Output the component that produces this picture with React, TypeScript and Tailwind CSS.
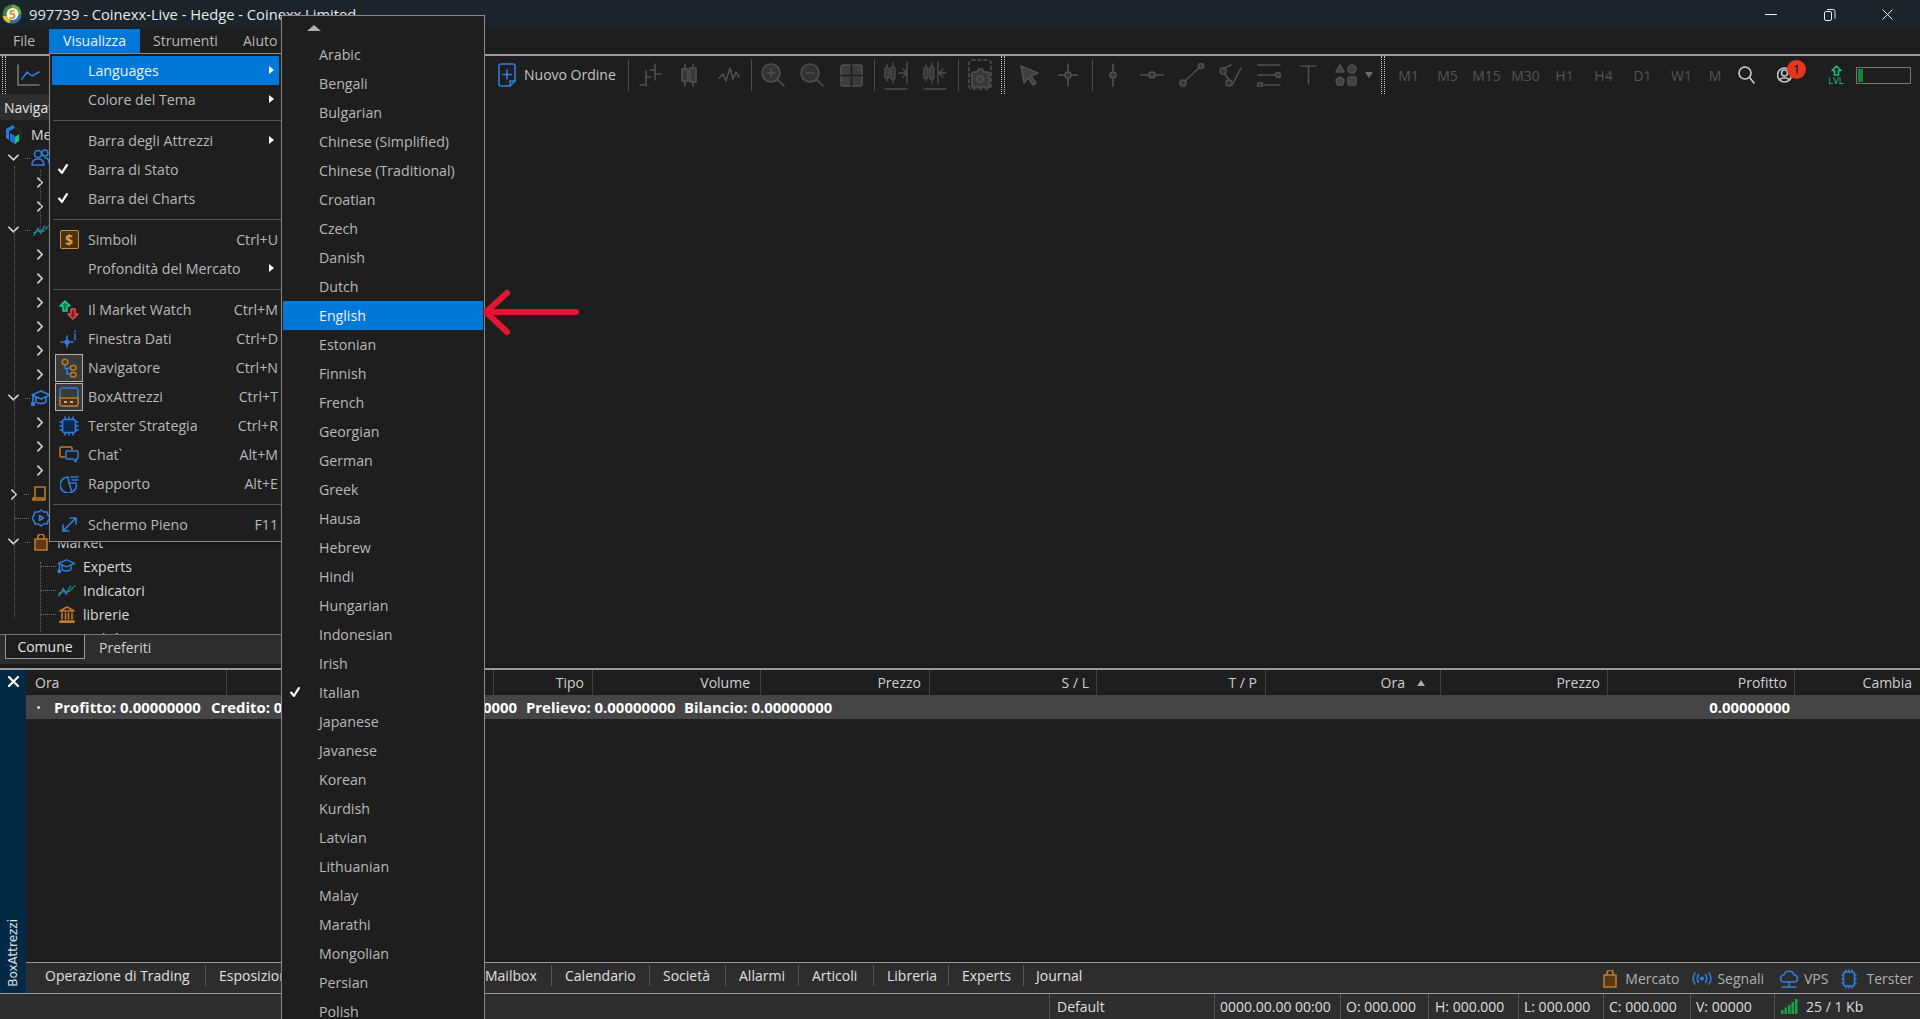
import type { ReactNode } from "react";

const FONT = "font-['Open_Sans','Noto_Sans',sans-serif]";

type IconProps = { className: string; box: string; children: ReactNode };

function Icon({ className, box, children }: IconProps) {
  return (
    <svg className={className} viewBox={box} fill="none" stroke="currentColor" strokeWidth="1.6" strokeLinecap="round" strokeLinejoin="round">
      {children}
    </svg>
  );
}

function Sep() {
  return <div className="w-px h-[32px] bg-[#4a4a4a] shrink-0" />;
}

function Grip({ className }: { className: string }) {
  return <div className={`w-[4px] h-[38px] shrink-0 border-x border-dotted border-[#d0d0d0] ${className}`} />;
}

function Toolbar() {
  const gray = "text-[#505050] shrink-0";
  return (
    <div className="h-[38px] flex items-center bg-[#1e1e1e] shrink-0">
      <Grip className="ml-[2px]" />
      <Icon className="ml-[11px] w-[24px] h-[22px] shrink-0 text-[#777]" box="0 0 24 22">
        <path d="M1 1v20h21" />
        <path d="M5 15l5-7 5 4 7-4" stroke="#2f7de0" />
      </Icon>
      <Icon className="ml-[457px] w-[18px] h-[24px] shrink-0 text-[#2f7de0]" box="0 0 18 24">
        <path d="M3 1h12a2 2 0 0 1 2 2v15l-5 5H3a2 2 0 0 1-2-2V3a2 2 0 0 1 2-2z" />
        <path d="M9 7v9M4.500 11.500h9M12 23v-5h5" />
      </Icon>
      <span className="ml-[8px] mt-[-2px] w-[93px] text-[14px] whitespace-nowrap text-[#c4c4c4]">Nuovo Ordine</span>
      <div className="ml-[11px]"><Sep /></div>
      <Icon className={`ml-[9px] w-[24px] h-[24px] ${gray}`} box="0 0 24 24">
        <path d="M8 8v15M2 22h6M8 14h5M17 1v16M12 7h5M17 11h6" />
      </Icon>
      <Icon className={`ml-[19px] w-[16px] h-[24px] ${gray}`} box="0 0 16 24">
        <path d="M4 1v22M12 1v22" />
        <rect x="1" y="6" width="6" height="12" fill="#383838" />
        <rect x="9" y="5" width="6" height="14" fill="#383838" />
      </Icon>
      <Icon className={`ml-[21px] w-[22px] h-[20px] ${gray}`} box="0 0 22 20">
        <path d="M1 13l4-4 3 7 4-13 3 11 3-7 3 5" />
      </Icon>
      <div className="ml-[11px]"><Sep /></div>
      <Icon className={`ml-[9px] w-[24px] h-[24px] ${gray}`} box="0 0 24 24">
        <circle cx="10" cy="10" r="9" fill="#333" />
        <path d="M16.500 16.500L23 23M10 6v8M6 10h8" />
      </Icon>
      <Icon className={`ml-[15px] w-[24px] h-[24px] ${gray}`} box="0 0 24 24">
        <circle cx="10" cy="10" r="9" fill="#333" />
        <path d="M16.500 16.500L23 23M6 10h8" />
      </Icon>
      <Icon className={`ml-[16px] w-[23px] h-[23px] ${gray}`} box="0 0 23 23">
        <rect x="1" y="1" width="21" height="21" rx="2" fill="#3c3c3c" />
        <path d="M11.500 1v21M1 11.500h21" stroke="#1e1e1e" />
      </Icon>
      <div className="ml-[11px]"><Sep /></div>
      <Icon className={`ml-[9px] w-[24px] h-[30px] ${gray}`} box="0 0 24 30">
        <path d="M3 5v16M9 3v20M15 13h7M19 9l4 4-4 4M23 2v22M1 29h22" strokeWidth="1.300" />
        <rect x="1" y="8" width="4" height="10" fill="#383838" strokeWidth="1" />
        <rect x="7" y="7" width="4" height="12" fill="#383838" strokeWidth="1" />
      </Icon>
      <Icon className={`ml-[15px] w-[24px] h-[30px] ${gray}`} box="0 0 24 30">
        <path d="M3 5v16M9 3v20M15 2v22M23 13h-6M20 9l-4 4 4 4M1 29h22" strokeWidth="1.300" />
        <rect x="1" y="8" width="4" height="10" fill="#383838" strokeWidth="1" />
        <rect x="7" y="7" width="4" height="12" fill="#383838" strokeWidth="1" />
      </Icon>
      <div className="ml-[11px]"><Sep /></div>
      <Icon className={`ml-[9px] w-[24px] h-[32px] ${gray}`} box="0 0 24 32">
        <rect x="1" y="1" width="22" height="29" rx="3" strokeDasharray="3 3" />
        <path d="M4 28v-13a2 2 0 0 1 2-2h3l2-3h3l2 3h3a2 2 0 0 1 2 2v13z" fill="#383838" />
        <circle cx="12" cy="20" r="3" />
      </Icon>
      <Grip className="ml-[9px]" />
      <Icon className={`ml-[15px] w-[19px] h-[21px] ${gray}`} box="0 0 19 21">
        <path d="M1 1l17 7-7 3 5 7-3 2-5-7-4 5z" fill="#404040" />
      </Icon>
      <Icon className={`ml-[19px] w-[20px] h-[24px] ${gray}`} box="0 0 20 24">
        <path d="M10 1v22M0 12h20" />
        <circle cx="10" cy="12" r="3" fill="#333" />
      </Icon>
      <div className="ml-[14px]"><Sep /></div>
      <Icon className={`ml-[10px] w-[20px] h-[24px] ${gray}`} box="0 0 20 24">
        <path d="M10 1v22" />
        <circle cx="10" cy="12" r="3" fill="#333" />
      </Icon>
      <Icon className={`ml-[17px] w-[24px] h-[10px] ${gray}`} box="0 0 24 10">
        <path d="M0 5h24" />
        <circle cx="12" cy="5" r="3" fill="#333" />
      </Icon>
      <Icon className={`ml-[15px] w-[26px] h-[24px] ${gray}`} box="0 0 26 24">
        <path d="M5 19L21 4" />
        <circle cx="4" cy="20" r="3" fill="#333" />
        <circle cx="22" cy="3" r="2.500" fill="#333" />
      </Icon>
      <Icon className={`ml-[13px] w-[24px] h-[24px] ${gray}`} box="0 0 24 24">
        <path d="M4 6l9-4M6 10l6 8M23 5L14 22" />
        <circle cx="5" cy="8" r="3" fill="#333" />
        <circle cx="11" cy="20" r="3" fill="#333" />
      </Icon>
      <Icon className={`ml-[15px] w-[24px] h-[24px] ${gray}`} box="0 0 24 24">
        <path d="M1 2h22M1 12h18M7 22h16" />
        <circle cx="21" cy="12" r="2.500" fill="#333" />
        <circle cx="3" cy="22" r="2.500" fill="#333" />
      </Icon>
      <Icon className={`ml-[19px] w-[17px] h-[20px] ${gray}`} box="0 0 17 20">
        <path d="M1 1h15M8.500 1v18" />
      </Icon>
      <Icon className={`ml-[18px] w-[22px] h-[22px] ${gray}`} box="0 0 22 22">
        <path d="M5 1l4 7H1z" fill="#404040" />
        <circle cx="17" cy="5" r="4" fill="#404040" />
        <path d="M5 13l4 3-1.500 5h-5L1 16z" fill="#404040" />
        <rect x="13" y="13" width="8" height="8" rx="1.500" fill="#404040" />
      </Icon>
      <div className="ml-[8px] w-0 h-0 shrink-0 border-x-[4.500px] border-x-transparent border-t-[6px] border-t-[#6a6a6a]" />
      <Grip className="ml-[8px]" />
      <div className="ml-[4px] flex text-[14px] text-[#555] shrink-0">
        {["M1", "M5", "M15", "M30", "H1", "H4", "D1", "W1"].map((t) => (
          <span key={t} className="w-[39px] text-center">{t}</span>
        ))}
        <span className="w-[28px] text-center">M</span>
      </div>
      <Icon className="ml-[9px] w-[17px] h-[18px] shrink-0 text-[#d0d0d0]" box="0 0 17 18">
        <circle cx="7" cy="7" r="6" />
        <path d="M11.500 11.500L16 17" />
      </Icon>
      <div className="ml-[22px] relative w-[15px] h-[18px] shrink-0">
        <Icon className="w-[15px] h-[18px] text-[#c8c8c8]" box="0 0 15 18">
          <circle cx="7.500" cy="9" r="7" />
          <circle cx="7.500" cy="7" r="3" />
          <path d="M2.500 14c2-3 8-3 10 0" />
        </Icon>
        <span className="absolute left-[10px] top-[-6px] w-[19px] h-[19px] rounded-full bg-[#e5371f] text-[#111] text-[13px] leading-[19px] text-center">1</span>
      </div>
      <div className="ml-[36px] w-[16px] flex flex-col items-center shrink-0">
        <Icon className="w-[11px] h-[11px] text-[#12c27a]" box="0 0 11 11">
          <path d="M5.500 1L10 5.500H7.500V10h-4V5.500H1z" />
        </Icon>
        <span className="text-[9.500px] leading-[10px] text-[#12c27a]">LVL</span>
      </div>
      <div className="ml-[12px] w-[55px] h-[17px] border border-[#777] shrink-0 p-px">
        <div className="w-[5px] h-full bg-[#14853a]" />
      </div>
    </div>
  );
}

function Chevron({ dir, className }: { dir: "d" | "r"; className: string }) {
  return dir === "d" ? (
    <Icon className={`${className} text-[#d8d8d8] shrink-0`} box="0 0 12 8">
      <path d="M1 1l5 5 5-5" strokeWidth="1.800" />
    </Icon>
  ) : (
    <Icon className={`${className} text-[#d8d8d8] shrink-0`} box="0 0 8 12">
      <path d="M1 1l5 5-5 5" strokeWidth="1.800" />
    </Icon>
  );
}

function Dots({ className }: { className: string }) {
  return <div className={`h-0 border-t border-dotted border-[#777] shrink-0 ${className}`} />;
}

function CapIcon({ className }: { className: string }) {
  return (
    <Icon className={`${className} text-[#2f7de0] shrink-0`} box="0 0 20 18">
      <path d="M1 6l9-4 9 4-9 4zM5 8v5c3 2 7 2 10 0V8M2 7v7" />
      <circle cx="2" cy="15" r="1.500" fill="#2f7de0" />
    </Icon>
  );
}

function WaveIcon({ className }: { className: string }) {
  return (
    <svg className={`${className} shrink-0`} viewBox="0 0 20 16" fill="none" strokeWidth="1.500" strokeLinecap="round">
      <path d="M1 14l5-8 3 6 5-9" stroke="#2f7de0" />
      <path d="M1 11c3 0 4-2 7-2s4 1 6-1 3-5 5-5" stroke="#18a34a" strokeDasharray="3 2" />
    </svg>
  );
}

function Sub({ n }: { n: number }) {
  return (
    <>
      {Array.from({ length: n }).map((_, i) => (
        <div key={i} className="h-[24px] flex items-center pl-[37px]">
          <Chevron dir="r" className="w-[7px] h-[11px]" />
        </div>
      ))}
    </>
  );
}

function Navigator() {
  return (
    <div className="w-[281px] shrink-0 flex flex-col bg-[#1e1e1e] overflow-hidden">
      <div className="h-[26px] shrink-0 bg-[#2d2d2d] flex items-center pl-[4px] text-[14px] text-[#e4e4e4] mb-[2px]">Navigatore</div>
      <div className="relative flex-1 overflow-hidden text-[14px] text-[#d8d8d8]">
        <div className="absolute left-[14px] top-[44px] h-[452px] border-l border-dotted border-[#666]" />
        <div className="absolute left-[40px] top-[48px] h-[64px] border-l border-dotted border-[#555]" />
        <div className="absolute left-[40px] top-[440px] h-[70px] border-l border-dotted border-[#666]" />
        <div className="h-[24px] flex items-center pl-[5px]">
          <svg className="w-[18px] h-[21px] shrink-0" viewBox="0 0 18 21">
            <path d="M8 1L1 5v9l3 2V7l6-3z" fill="#1f7fe0" />
            <path d="M11 3l6 3v8l-3 2V7l-6-2z" fill="#2a2a2a" />
            <path d="M5 9l5 3v8l-5-3z" fill="#1f6fd6" />
            <path d="M10 13l4-3v7l-4 3z" fill="#18c48a" />
          </svg>
          <span className="ml-[8px] whitespace-nowrap">MetaTrader 5</span>
        </div>
        <div className="h-[24px] flex items-center pl-[8px]">
          <Chevron dir="d" className="w-[11px] h-[8px]" />
          <Dots className="ml-[6px] w-[5px]" />
          <Icon className="ml-[1px] w-[19px] h-[18px] text-[#2f7de0] shrink-0" box="0 0 19 18">
            <circle cx="7" cy="5" r="3.500" />
            <path d="M1 16c0-4 2-6 6-6s6 2 6 6z" />
            <circle cx="14" cy="4" r="3" />
            <path d="M14 9c3 0 4 2 4 5" />
          </Icon>
        </div>
        <Sub n={2} />
        <div className="h-[24px] flex items-center pl-[8px]">
          <Chevron dir="d" className="w-[11px] h-[8px]" />
          <Dots className="ml-[6px] w-[5px]" />
          <WaveIcon className="ml-[3px] w-[17px] h-[14px]" />
        </div>
        <Sub n={6} />
        <div className="h-[24px] flex items-center pl-[8px]">
          <Chevron dir="d" className="w-[11px] h-[8px]" />
          <Dots className="ml-[6px] w-[5px]" />
          <CapIcon className="ml-[1px] w-[20px] h-[18px]" />
        </div>
        <Sub n={3} />
        <div className="h-[24px] flex items-center pl-[11px]">
          <Chevron dir="r" className="w-[7px] h-[11px]" />
          <Dots className="ml-[6px] w-[5px]" />
          <Icon className="ml-[3px] w-[14px] h-[16px] text-[#c07a28] shrink-0" box="0 0 14 16">
            <path d="M3 1h10v13H1l2-2zM1 14v-2h10v2" />
          </Icon>
        </div>
        <div className="h-[24px] flex items-center pl-[15px]">
          <Dots className="w-[14px]" />
          <Icon className="ml-[3px] w-[18px] h-[18px] text-[#2f7de0] shrink-0" box="0 0 18 18">
            <path d="M9 1l2.500 2H15l1 3 2 3-2 3-1 3h-3.500L9 17l-2.500-2H3l-1-3-2-3 2-3 1-3h3.500z" />
            <path d="M7.500 6.500v5l4-2.500z" />
          </Icon>
        </div>
        <div className="h-[24px] flex items-center pl-[8px]">
          <Chevron dir="d" className="w-[11px] h-[8px]" />
          <Dots className="ml-[6px] w-[5px]" />
          <Icon className="ml-[4px] w-[14px] h-[17px] text-[#c07a28] shrink-0" box="0 0 14 17">
            <path d="M1 5h12v11H1z" fill="#5a3a14" />
            <path d="M4 5V3a3 3 0 0 1 6 0v2" />
          </Icon>
          <span className="ml-[9px]">Market</span>
        </div>
        <div className="h-[24px] flex items-center pl-[41px]">
          <Dots className="w-[15px]" />
          <CapIcon className="ml-[1px] w-[19px] h-[16px]" />
          <span className="ml-[7px]">Experts</span>
        </div>
        <div className="h-[24px] flex items-center pl-[41px]">
          <Dots className="w-[15px]" />
          <WaveIcon className="ml-[2px] w-[18px] h-[15px]" />
          <span className="ml-[7px]">Indicatori</span>
        </div>
        <div className="h-[24px] flex items-center pl-[41px]">
          <Dots className="w-[15px]" />
          <Icon className="ml-[3px] w-[16px] h-[17px] text-[#c07a28] shrink-0" box="0 0 16 17">
            <path d="M8 1l7 4H1zM3 7v6M6.500 7v6M9.500 7v6M13 7v6M1 15h14v1.500H1z" />
          </Icon>
          <span className="ml-[8px]">librerie</span>
        </div>
        <div className="h-[24px] flex items-center pl-[61px]">
          <span className="ml-[22px]">Utilità</span>
        </div>
      </div>
      <div className="h-[30px] shrink-0 bg-[#2d2d2d] border-t border-[#777] flex items-start text-[14px]">
        <div className="ml-[5px] w-[80px] h-[24px] bg-[#1e1e1e] border border-t-0 border-[#999] text-[#e4e4e4] flex items-center justify-center">Comune</div>
        <div className="ml-[14px] h-[24px] flex items-center text-[#d0d0d0]">Preferiti</div>
      </div>
    </div>
  );
}

const columns = [
  { label: "Ora", cls: "w-[201px] text-left pl-[9px]" },
  { label: "Simbolo", cls: "w-[133px] text-right pr-[8px]" },
  { label: "Ticket", cls: "w-[134px] text-right pr-[8px]" },
  { label: "Tipo", cls: "w-[99px] text-right pr-[8px]" },
  { label: "Volume", cls: "w-[168px] text-right pr-[10px]" },
  { label: "Prezzo", cls: "w-[169px] text-right pr-[8px]" },
  { label: "S / L", cls: "w-[167px] text-right pr-[7px]" },
  { label: "T / P", cls: "w-[169px] text-right pr-[8px]" },
];

const tabs = [
  { label: "Operazione di Trading", cls: "w-[174px]" },
  { label: "Esposizione", cls: "w-[110px]" },
  { label: "Storia", cls: "w-[84px]" },
  { label: "News", cls: "w-[72px]" },
  { label: "Mailbox", cls: "w-[80px]" },
  { label: "Calendario", cls: "w-[98px]" },
  { label: "Società", cls: "w-[76px]" },
  { label: "Allarmi", cls: "w-[73px]" },
  { label: "Articoli", cls: "w-[75px]" },
  { label: "Libreria", cls: "w-[75px]" },
  { label: "Experts", cls: "w-[75px]" },
];

function Toolbox() {
  return (
    <div className="h-[325px] shrink-0 flex border-t-2 border-[#999] bg-[#1e1e1e]">
      <div className="w-[26px] shrink-0 bg-[#022a46] flex flex-col items-center justify-between pt-[6px] pb-[6px]">
        <Icon className="w-[11px] h-[11px] text-white" box="0 0 11 11">
          <path d="M1 1l9 9M10 1l-9 9" strokeWidth="2.200" />
        </Icon>
        <span className="[writing-mode:vertical-rl] rotate-180 font-['DejaVu_Sans',sans-serif] text-[12px] leading-[12px] text-[#e0e0e0]">BoxAttrezzi</span>
      </div>
      <div className="flex-1 flex flex-col min-w-0">
        <div className="h-[25px] shrink-0 flex text-[14px] text-[#cfcfcf]">
          {columns.map((c) => (
            <div key={c.label + c.cls} className={`${c.cls} h-full border-r border-[#444] flex items-center shrink-0`}>
              <span className="w-full whitespace-nowrap">{c.label}</span>
            </div>
          ))}
          <div className="w-[175px] h-full border-r border-[#444] flex items-center justify-end pr-[15px] shrink-0">
            Ora
            <span className="ml-[12px] w-0 h-0 border-x-[4.500px] border-x-transparent border-b-[6px] border-b-[#aaa]" />
          </div>
          <div className="w-[167px] h-full border-r border-[#444] flex items-center justify-end pr-[7px] shrink-0">Prezzo</div>
          <div className="w-[187px] h-full border-r border-[#444] flex items-center justify-end pr-[7px] shrink-0">Profitto</div>
          <div className="flex-1 flex items-center justify-end pr-[8px]">Cambia</div>
        </div>
        <div className="h-[24px] pt-px shrink-0 bg-[#454545] flex items-center text-[14.900px] font-bold text-white whitespace-nowrap">
          <span className="ml-[11px] w-[3px] h-[3px] rounded-full bg-[#ddd]" />
          <span className="ml-[14px] w-[147px]">Profitto: 0.00000000</span>
          <span className="ml-[10px] w-[143px]">Credito: 0.00000000</span>
          <span className="ml-[10px] w-[153px] flex justify-end">Deposito: 0.00000000</span>
          <span className="ml-[9px] w-[148px]">Prelievo: 0.00000000</span>
          <span className="ml-[10px] w-[147px]">Bilancio: 0.00000000</span>
          <span className="ml-auto mr-[130px]">0.00000000</span>
        </div>
        <div className="flex-1" />
        <div className="h-[31px] shrink-0 border-t border-[#999] bg-[#2d2d2d] flex items-center text-[14px] text-[#e0e0e0]">
          <div className="ml-[6px] flex mb-[6px]">
            {tabs.map((t) => (
              <div key={t.label} className={`${t.cls} h-[21px] pl-[13px] border-r border-[#555] flex items-center whitespace-nowrap shrink-0`}>{t.label}</div>
            ))}
            <div className="pl-[12px] h-[21px] flex items-center">Journal</div>
          </div>
          <div className="ml-auto flex items-center text-[#b0b0b0] pt-[1px]">
            <Icon className="w-[14px] h-[18px] text-[#c07a28] shrink-0" box="0 0 14 18">
              <path d="M1 5h12v12H1z" fill="#5a3a14" />
              <path d="M4 5V3a3 3 0 0 1 6 0v2" />
            </Icon>
            <span className="ml-[8px]">Mercato</span>
            <Icon className="ml-[13px] w-[20px] h-[13px] text-[#2f7de0] shrink-0" box="0 0 20 13">
              <circle cx="10" cy="6.500" r="1.300" fill="#2f7de0" />
              <path d="M6.500 2.500c-1.500 2.500-1.500 5.500 0 8M13.500 2.500c1.500 2.500 1.500 5.500 0 8M3 1c-2.500 3.500-2.500 7.500 0 11M17 1c2.500 3.500 2.500 7.500 0 11" />
            </Icon>
            <span className="ml-[5px]">Segnali</span>
            <Icon className="ml-[15px] w-[20px] h-[20px] text-[#2f7de0] shrink-0" box="0 0 20 20">
              <path d="M5 13a3.500 3.500 0 0 1 0-7c1-5 9-5 10 0a3.500 3.500 0 0 1 0 7zM10 13v4M3 18h14" />
            </Icon>
            <span className="ml-[5px]">VPS</span>
            <Icon className="ml-[13px] w-[16px] h-[20px] text-[#2f7de0] shrink-0" box="0 0 16 20">
              <rect x="2.500" y="3" width="11" height="14" rx="2" />
              <path d="M5 1v2M8 1v2M11 1v2M5 17v2M8 17v2M11 17v2M1 6h1.500M1 10h1.500M1 14h1.500M13.500 6H15M13.500 10H15M13.500 14H15" />
            </Icon>
            <span className="ml-[9px] mr-[7px]">Terster</span>
          </div>
        </div>
      </div>
    </div>
  );
}

const statusCells = [
  { label: "Default", cls: "w-[165px] pl-[7px]" },
  { label: "0000.00.00 00:00", cls: "w-[126px] pl-[5px]" },
  { label: "O: 000.000", cls: "w-[88px] pl-[5px]" },
  { label: "H: 000.000", cls: "w-[90px] pl-[6px]" },
  { label: "L: 000.000", cls: "w-[85px] pl-[5px]" },
  { label: "C: 000.000", cls: "w-[87px] pl-[5px]" },
  { label: "V: 00000", cls: "w-[84px] pl-[5px]" },
];

function StatusBar() {
  return (
    <div className="h-[26px] shrink-0 border-t border-[#999] bg-[#2d2d2d] flex justify-end items-stretch text-[14px] text-[#dedede]">
      {statusCells.map((c) => (
        <div key={c.label} className={`${c.cls} border-l border-[#555] flex items-center whitespace-nowrap`}>{c.label}</div>
      ))}
      <div className="w-[146px] border-l border-[#555] flex items-center pl-[6px]">
        <svg className="w-[17px] h-[15px] shrink-0" viewBox="0 0 17 15" fill="#18a34a">
          <rect x="0" y="11" width="2.500" height="4" />
          <rect x="3.500" y="8.500" width="2.500" height="6.500" />
          <rect x="7" y="6" width="2.500" height="9" />
          <rect x="10.500" y="3" width="2.500" height="12" />
          <rect x="14" y="0" width="2.500" height="15" />
        </svg>
        <span className="ml-[8px] whitespace-nowrap">25 / 1 Kb</span>
      </div>
    </div>
  );
}

function Check({ className }: { className: string }) {
  return (
    <Icon className={`w-[10px] h-[10px] text-white ${className}`} box="0 0 9 9">
      <path d="M1 5l2.500 3L8 1" strokeWidth="2" />
    </Icon>
  );
}

function MenuItem({ label, icon, shortcut, arrow, check, active, boxed }: {
  label: string;
  icon?: ReactNode;
  shortcut?: string;
  arrow?: boolean;
  check?: boolean;
  active?: boolean;
  boxed?: boolean;
}) {
  return (
    <div className={`h-[29px] mx-[2px] flex items-center ${active ? "bg-[#0078d7] text-[#f0f0f0]" : "text-[#b8b8b8]"}`}>
      <div className={`w-[28px] h-[28px] ml-[3px] flex items-center justify-center shrink-0 ${boxed ? "border border-[#b0b0b0] bg-[#3a3a3a]" : ""}`}>
        {check ? <Check className="mr-[12px] mt-[-2px]" /> : icon}
      </div>
      <span className="ml-[5px] whitespace-nowrap">{label}</span>
      {shortcut && <span className="ml-auto mr-px">{shortcut}</span>}
      {arrow && <span className="ml-auto mr-[5px] mt-[-2px] w-0 h-0 border-y-[4.500px] border-y-transparent border-l-[5px] border-l-white" />}
    </div>
  );
}

function MenuSep({ className }: { className: string }) {
  return (
    <div className={`${className} flex items-center pl-[3px]`}>
      <div className="w-full h-px bg-[#555]" />
    </div>
  );
}

const blue = "#2f7de0";
const orange = "#c07a28";

function ViewMenu() {
  return (
    <div className="absolute left-[49px] top-[53px] w-[233px] h-[489px] z-20 bg-[#1e1e1e] border border-[#8a8a8a] pt-[2px] text-[14.200px] shadow-[2px_2px_3px_rgba(0,0,0,0.4)]">
      <MenuItem label="Languages" arrow active />
      <MenuItem label="Colore del Tema" arrow />
      <MenuSep className="h-[12px]" />
      <MenuItem label="Barra degli Attrezzi" arrow />
      <MenuItem label="Barra di Stato" check />
      <MenuItem label="Barra dei Charts" check />
      <MenuSep className="h-[12px]" />
      <MenuItem
        label="Simboli"
        shortcut="Ctrl+U"
        icon={
          <div className="w-[19px] h-[19px] rounded-[2px] border border-[#d08a3c] bg-[#4a3114] text-[#e09a48] text-[14px] font-bold leading-[17px] text-center">$</div>
        }
      />
      <MenuItem label="Profondità del Mercato" arrow />
      <MenuSep className="h-[12px]" />
      <MenuItem
        label="Il Market Watch"
        shortcut="Ctrl+M"
        icon={
          <svg className="w-[20px] h-[20px]" viewBox="0 0 20 20" strokeWidth="1.500" strokeLinejoin="round">
            <path d="M6 1L1 6h3v5h4V6h3z" fill="#0f7a52" stroke="#1fd08c" />
            <path d="M14 19l5-5h-3V9h-4v5H9z" fill="#7a1f24" stroke="#e8494f" />
          </svg>
        }
      />
      <MenuItem
        label="Finestra Dati"
        shortcut="Ctrl+D"
        icon={
          <Icon className="w-[18px] h-[18px] text-[#2f7de0]" box="0 0 18 18">
            <path d="M7 6v11M1 12h12" />
            <circle cx="7" cy="12" r="1.800" fill={blue} />
            <path d="M15 1v1M15 4v6" strokeWidth="1.400" />
          </Icon>
        }
      />
      <MenuItem
        label="Navigatore"
        shortcut="Ctrl+N"
        boxed
        icon={
          <svg className="w-[16px] h-[20px]" viewBox="0 0 16 20" fill="none" strokeWidth="1.500">
            <circle cx="4" cy="4" r="2.800" stroke={orange} />
            <rect x="9.500" y="7.500" width="5.500" height="4.500" rx="2" stroke={orange} />
            <rect x="9.500" y="14.500" width="5.500" height="4.500" rx="2" stroke={orange} />
            <path d="M4 7v3c0 1 1 1 5 0M6 10v6h3" stroke={blue} />
          </svg>
        }
      />
      <MenuItem
        label="BoxAttrezzi"
        shortcut="Ctrl+T"
        boxed
        icon={
          <svg className="w-[20px] h-[20px]" viewBox="0 0 20 20" fill="none" strokeWidth="1.500">
            <rect x="1" y="1" width="18" height="18" rx="3" stroke={blue} />
            <path d="M1 11h18v6a2 2 0 0 1-2 2H3a2 2 0 0 1-2-2z" fill="#4a3114" stroke={orange} />
            <path d="M5 15h3M11 15h3" stroke="#ddd" />
          </svg>
        }
      />
      <MenuItem
        label="Terster Strategia"
        shortcut="Ctrl+R"
        icon={
          <Icon className="w-[20px] h-[20px] text-[#2f7de0]" box="0 0 20 20">
            <rect x="3.500" y="3.500" width="13" height="13" rx="2" fill="#0d2a4e" />
            <path d="M6 1v2M10 1v2M14 1v2M6 17v2M10 17v2M14 17v2M1 6h2M1 10h2M1 14h2M17 6h2M17 10h2M17 14h2" />
          </Icon>
        }
      />
      <MenuItem
        label="Chat`"
        shortcut="Alt+M"
        icon={
          <svg className="w-[20px] h-[17px]" viewBox="0 0 20 17" fill="none" strokeWidth="1.500" strokeLinejoin="round">
            <path d="M2 1h10a1 1 0 0 1 1 1v2M6 11H2a1 1 0 0 1-1-1V2a1 1 0 0 1 1-1" stroke={orange} />
            <path d="M8 5h10a1 1 0 0 1 1 1v6a1 1 0 0 1-1 1h-1v3l-3-3H8a1 1 0 0 1-1-1V6a1 1 0 0 1 1-1z" stroke={blue} />
          </svg>
        }
      />
      <MenuItem
        label="Rapporto"
        shortcut="Alt+E"
        icon={
          <Icon className="w-[19px] h-[18px] text-[#2f7de0]" box="0 0 19 18">
            <path d="M8 2a8 8 0 1 0 4 15M9 8L8 2M9 8l3 9M9 8h7a7 7 0 0 1-4 9M11 2h7M12 5h6" />
          </Icon>
        }
      />
      <MenuSep className="h-[12px]" />
      <MenuItem
        label="Schermo Pieno"
        shortcut="F11"
        icon={
          <Icon className="w-[17px] h-[17px] text-[#2f7de0]" box="0 0 17 17">
            <path d="M2 15L15 2M9 2h6v6M2 9v6h6" />
          </Icon>
        }
      />
    </div>
  );
}

const languages = [
  "Arabic", "Bengali", "Bulgarian", "Chinese (Simplified)", "Chinese (Traditional)", "Croatian", "Czech", "Danish", "Dutch", "English", "Estonian", "Finnish", "French", "Georgian", "German", "Greek", "Hausa", "Hebrew", "Hindi", "Hungarian", "Indonesian", "Irish", "Italian", "Japanese", "Javanese", "Korean", "Kurdish", "Latvian", "Lithuanian", "Malay", "Marathi", "Mongolian", "Persian", "Polish",
];

function LanguageMenu() {
  return (
    <div className="absolute left-[281px] top-[15px] w-[204px] h-[1010px] z-30 bg-[#1e1e1e] border border-[#8a8a8a] text-[14.200px] text-[#b8b8b8]">
      <div className="h-[24px] flex items-center pl-[25px]">
        <div className="w-0 h-0 border-x-[7px] border-x-transparent border-b-[6px] border-b-[#b0b0b0]" />
      </div>
      {languages.map((l) => (
        <div key={l} className={`h-[29px] mx-px flex items-center ${l === "English" ? "bg-[#0078d7] text-[#f0f0f0]" : ""}`}>
          <div className="w-[36px] pl-[7px] flex items-center shrink-0">
            {l === "Italian" && <Check className="mt-[-2px]" />}
          </div>
          <span className="whitespace-nowrap">{l}</span>
        </div>
      ))}
    </div>
  );
}

export default function App() {
  return (
    <div className={`relative w-[1920px] h-[1019px] overflow-hidden flex flex-col bg-[#1e1e1e] ${FONT}`}>
      <div className="h-[28px] shrink-0 bg-[#1b232b] flex items-center">
        <svg className="ml-[2px] w-[20px] h-[20px] shrink-0" viewBox="0 0 20 20">
          <circle cx="10" cy="10" r="9.500" fill="#3f7f3a" />
          <path d="M10 .5A9.500 9.500 0 0 1 19.500 10H10z" fill="#6fa84a" />
          <path d="M.5 12a9.500 9.500 0 0 0 7 7.300L9 12z" fill="#d9c23a" />
          <path d="M10 19.500A9.500 9.500 0 0 0 19.500 12H10z" fill="#2f6fb0" />
          <circle cx="10.500" cy="10" r="6" fill="#f2f2f2" />
          <text x="10.500" y="14.500" textAnchor="middle" fontSize="12" fontWeight="700" fill="#d8972c">5</text>
        </svg>
        <span className="ml-[7px] text-[14.700px] whitespace-nowrap text-[#e8e8e8]">997739 - Coinexx-Live - Hedge - Coinexx Limited</span>
        <div className="ml-auto flex items-center">
          <div className="w-[12px] h-px bg-[#f0f0f0]" />
          <svg className="ml-[46px] w-[13px] h-[13px]" viewBox="0 0 13 13" fill="none" stroke="#e8e8e8">
            <rect x="1.500" y="3.500" width="7" height="9" rx="1.500" />
            <path d="M4 1.500h6a2 2 0 0 1 2 2v7" />
          </svg>
          <svg className="ml-[46px] mr-[27px] w-[11px] h-[11px]" viewBox="0 0 11 11" stroke="#f0f0f0">
            <path d="M.5.5l10 10M10.500.5l-10 10" />
          </svg>
        </div>
      </div>

      <div className="h-[28px] shrink-0 bg-[#1e1e1e] border-b-2 border-[#9a9a9a] flex text-[14px] text-[#b8b8b8]">
        <div className="ml-[13px] w-[36px] h-[24px] mt-px leading-[24px]">File</div>
        <div className="w-[91px] h-[24px] mt-px leading-[24px] bg-[#0078d7] text-[#f0f0f0] text-center">Visualizza</div>
        <div className="ml-[13px] w-[90px] h-[24px] mt-px leading-[24px]">Strumenti</div>
        <div className="h-[24px] mt-px leading-[24px]">Aiuto</div>
      </div>

      <Toolbar />

      <div className="flex-1 flex min-h-0">
        <Navigator />
        <div className="flex-1 bg-[#1e1e1e]" />
      </div>
      <div className="h-[4px] shrink-0 bg-[#191919]" />
      <Toolbox />
      <StatusBar />

      <ViewMenu />
      <LanguageMenu />

      <svg className="absolute left-[480px] top-[288px] w-[100px] h-[48px] z-40" viewBox="0 0 100 48" fill="none" stroke="#e3162f" strokeWidth="6" strokeLinecap="round" strokeLinejoin="round">
        <path d="M6 24h90M27 5L6 24l21 20" />
      </svg>
    </div>
  );
}
